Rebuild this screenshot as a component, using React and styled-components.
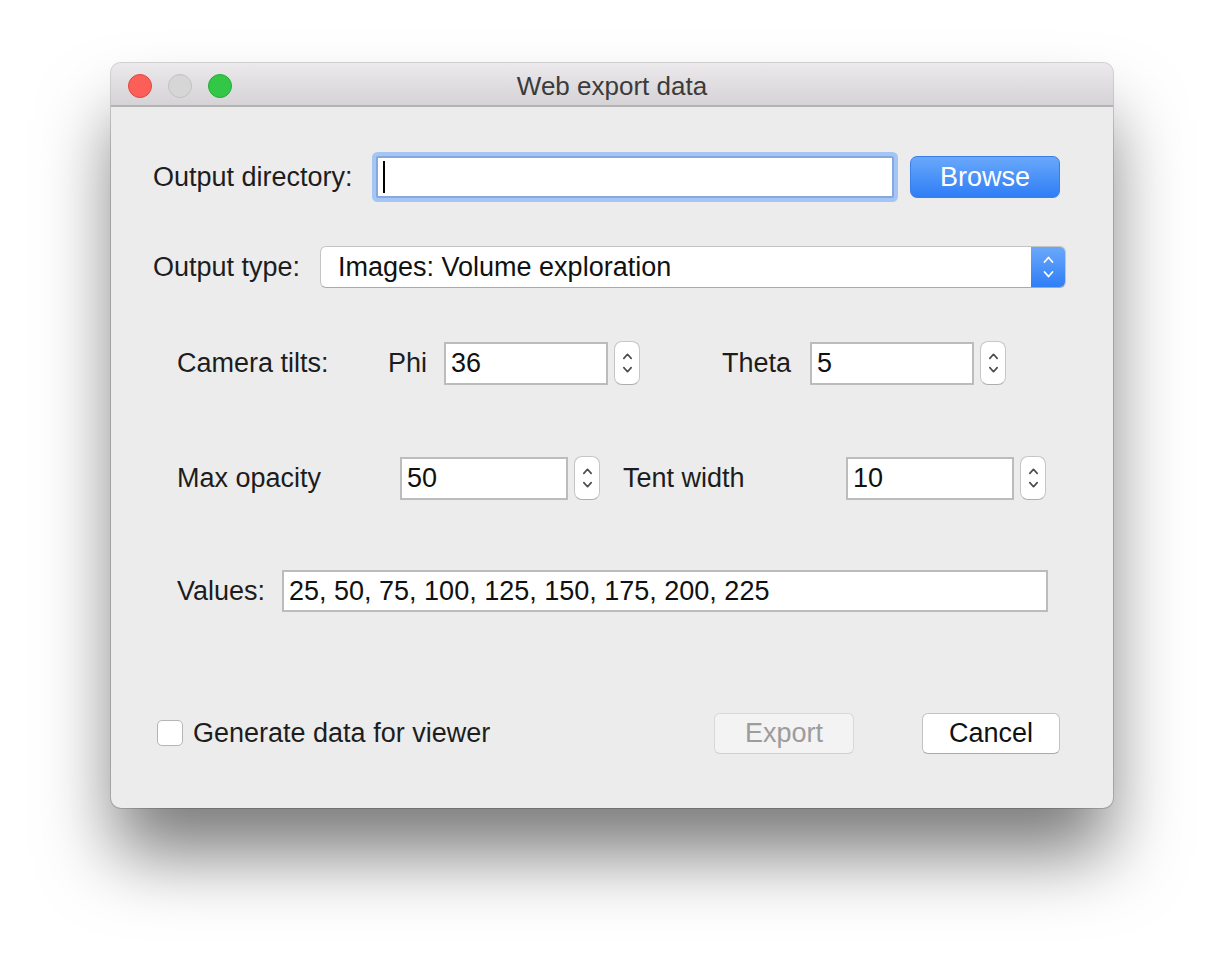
import React from 'react'
import styled, { createGlobalStyle } from 'styled-components'

const GlobalStyle = createGlobalStyle`
  html, body {
    margin: 0;
    padding: 0;
    background: #ffffff;
  }
  body {
    font-family: "Liberation Sans", Arial, sans-serif;
    color: #1d1d1d;
  }
`

const Stage = styled.div`
  width: 1224px;
  height: 968px;
  padding: 63px 0 0 111px;
  box-sizing: border-box;
  overflow: hidden;
`

const Window = styled.div`
  width: 1002px;
  height: 745px;
  background: #ececec;
  border-radius: 10px;
  box-shadow: 0 50px 72px -4px rgba(0, 0, 0, 0.52), 0 0 0 1px rgba(0, 0, 0, 0.16);
  display: flex;
  flex-direction: column;
  overflow: hidden;
`

const TitleBar = styled.div`
  height: 42px;
  flex-shrink: 0;
  background: linear-gradient(#ebe9eb, #d5d3d5);
  border-bottom: 2px solid #b3b3b3;
  display: flex;
  align-items: center;
  padding: 3px 0 0 17px;
  box-sizing: content-box;
  height: 39px;
  position: relative;
`

const Light = styled.span`
  width: 22px;
  height: 22px;
  border-radius: 50%;
  margin-right: 16px;
  background: ${p => p.fill};
  border: 1px solid ${p => p.edge};
`

const Title = styled.div`
  position: absolute;
  left: 0;
  right: 0;
  top: 0;
  bottom: 0;
  padding-top: 5px;
  display: flex;
  align-items: center;
  justify-content: center;
  font-size: 26px;
  color: #3b3b3b;
  pointer-events: none;
`

const Content = styled.div`
  display: flex;
  flex-direction: column;
  padding: 0 0 0 42px;
`

const Row = styled.div`
  display: flex;
  align-items: center;
  height: ${p => p.h}px;
  margin-top: ${p => p.mt}px;
  padding-left: ${p => p.indent || 0}px;
`

const Label = styled.div`
  width: ${p => p.w}px;
  flex-shrink: 0;
  font-size: 27px;
  line-height: 1;
  white-space: nowrap;
  color: #1d1d1d;
`

const Field = styled.div`
  width: ${p => p.w}px;
  height: ${p => p.h || 42}px;
  box-sizing: border-box;
  background: #fff;
  border: 2px solid #bcbcbc;
  font-size: 27px;
  display: flex;
  align-items: center;
  padding-left: 5px;
  white-space: nowrap;
  color: #111;
`

const FocusField = styled(Field)`
  border-color: #85a8e0;
  box-shadow: 0 0 0 4px #a5c6f4;
  border-radius: 2px;
`

const Caret = styled.span`
  width: 2px;
  height: 32px;
  background: #000;
`

const PrimaryButton = styled.div`
  margin-left: 16px;
  width: 150px;
  height: 42px;
  box-sizing: border-box;
  border-radius: 7px;
  background: linear-gradient(#69a8fb, #2f7ef6);
  border: 1px solid #3b7ee8;
  color: #fff;
  font-size: 27px;
  display: flex;
  align-items: center;
  justify-content: center;
`

const Select = styled.div`
  width: 746px;
  height: 42px;
  box-sizing: border-box;
  background: #fff;
  border: 1px solid #c4c4c4;
  border-bottom-color: #a9a9a9;
  border-radius: 6px;
  display: flex;
  align-items: center;
  overflow: hidden;
`

const SelectText = styled.div`
  flex: 1;
  padding-left: 17px;
  font-size: 27px;
  color: #111;
  white-space: nowrap;
`

const SelectArrows = styled.div`
  width: 34px;
  align-self: stretch;
  background: linear-gradient(#6aa8fb, #2f7ef6);
  display: flex;
  align-items: center;
  justify-content: center;
`

const Stepper = styled.div`
  margin-left: 6px;
  width: 26px;
  height: 44px;
  box-sizing: border-box;
  background: #fff;
  border: 1px solid #c6c6c6;
  border-bottom-color: #aeaeae;
  border-radius: 8px;
  display: flex;
  align-items: center;
  justify-content: center;
  flex-shrink: 0;
`

const Spacer = styled.div`
  width: ${p => p.w}px;
  flex-shrink: 0;
`

const Checkbox = styled.div`
  width: 26px;
  height: 26px;
  box-sizing: border-box;
  background: #fff;
  border: 1px solid #b5b5b5;
  border-radius: 5px;
  margin-left: 4px;
  margin-right: 10px;
  flex-shrink: 0;
`

const PushButton = styled.div`
  width: ${p => p.w}px;
  height: 41px;
  box-sizing: border-box;
  border-radius: 6px;
  background: ${p => (p.disabled ? '#f3f3f3' : '#ffffff')};
  border: 1px solid ${p => (p.disabled ? '#d8d8d8' : '#c3c3c3')};
  border-bottom-color: ${p => (p.disabled ? '#cfcfcf' : '#a9a9a9')};
  color: ${p => (p.disabled ? '#9c9c9c' : '#111')};
  font-size: 27px;
  display: flex;
  align-items: center;
  justify-content: center;
  flex-shrink: 0;
`

const Chevrons = ({ color, width = 12, height = 30 }) => (
  <svg width={width} height={height} viewBox="0 0 12 30" fill="none">
    <path d="M2 10 L6 5.5 L10 10" stroke={color} strokeWidth="1.8" strokeLinecap="round" strokeLinejoin="round" />
    <path d="M2 20 L6 24.5 L10 20" stroke={color} strokeWidth="1.8" strokeLinecap="round" strokeLinejoin="round" />
  </svg>
)

const SpinField = ({ value, w }) => (
  <>
    <Field w={w} h={43}>{value}</Field>
    <Stepper>
      <Chevrons color="#4a4a4a" width={11} height={30} />
    </Stepper>
  </>
)

export default function App() {
  return (
    <Stage>
      <GlobalStyle />
      <Window>
        <TitleBar>
          <Light fill="#fc5f57" edge="#e0463f" />
          <Light fill="#d6d6d6" edge="#c2c2c2" />
          <Light fill="#33c748" edge="#27aa36" />
          <Title>Web export data</Title>
        </TitleBar>

        <Content>
          <Row h={50} mt={45}>
            <Label w={223}>Output directory:</Label>
            <FocusField w={518}>
              <Caret />
            </FocusField>
            <PrimaryButton>Browse</PrimaryButton>
          </Row>

          <Row h={42} mt={44}>
            <Label w={167}>Output type:</Label>
            <Select>
              <SelectText>Images: Volume exploration</SelectText>
              <SelectArrows>
                <Chevrons color="#ffffff" width={13} height={30} />
              </SelectArrows>
            </Select>
          </Row>

          <Row h={46} mt={52} indent={24}>
            <Label w={211}>Camera tilts:</Label>
            <Label w={56}>Phi</Label>
            <SpinField value="36" w={164} />
            <Spacer w={82} />
            <Label w={88}>Theta</Label>
            <SpinField value="5" w={164} />
          </Row>

          <Row h={46} mt={69} indent={24}>
            <Label w={223}>Max opacity</Label>
            <SpinField value="50" w={168} />
            <Spacer w={23} />
            <Label w={223}>Tent width</Label>
            <SpinField value="10" w={168} />
          </Row>

          <Row h={42} mt={69} indent={24}>
            <Label w={105}>Values:</Label>
            <Field w={766}>25, 50, 75, 100, 125, 150, 175, 200, 225</Field>
          </Row>

          <Row h={42} mt={100}>
            <Checkbox />
            <Label w={521}>Generate data for viewer</Label>
            <PushButton w={140} disabled>Export</PushButton>
            <Spacer w={68} />
            <PushButton w={138}>Cancel</PushButton>
          </Row>
        </Content>
      </Window>
    </Stage>
  )
}
